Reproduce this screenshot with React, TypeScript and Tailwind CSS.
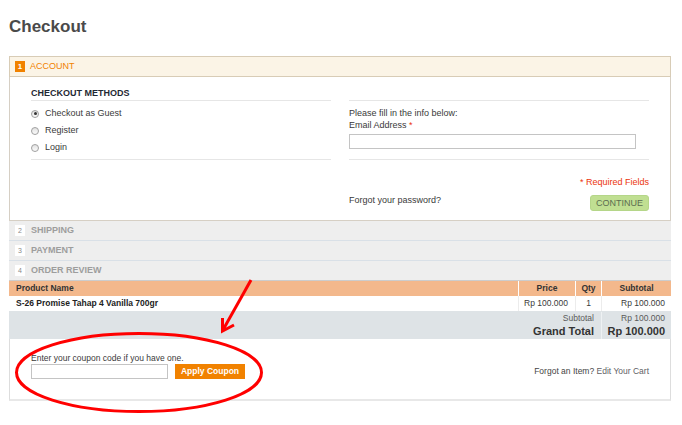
const font = "font-['Liberation_Sans',Arial,Helvetica,sans-serif]"

function Radio({ checked }: { checked?: boolean }) {
  return (
    <span className="flex h-[8px] w-[8px] items-center justify-center rounded-full border border-[#a0a0a0] bg-linear-to-b from-[#e2e2e2] to-[#fbfbfb]">
      {checked && <span className="h-[3px] w-[3px] rounded-full bg-[#333]" />}
    </span>
  )
}

function Step({ n, label, last }: { n: number; label: string; last?: boolean }) {
  return (
    <div
      className={`flex h-[20px] items-center gap-[6px] border-b bg-[#eeeeee] pl-[6px] ${
        last ? 'border-[#cccccc]' : 'border-[#d9e0e7]'
      }`}
    >
      <span className="flex h-[11px] w-[10px] items-center justify-center bg-white text-[7px] leading-none text-[#8a8a8a]">
        {n}
      </span>
      <span className="text-[9px] font-bold leading-none text-[#9d9d9d]">{label}</span>
    </div>
  )
}

export default function App() {
  return (
    <div className={`relative h-[425px] w-[682px] overflow-hidden bg-white ${font}`}>
      <div className="pl-[9px] pt-[17px]">
        <h1 className="h-[20px] text-[17px] font-bold leading-[20px] text-[#4a4a4a]">Checkout</h1>

        <div className="mt-[19px] w-[662px]">
          {/* step 1 header */}
          <div className="flex h-[21px] items-center gap-[5px] border border-[#d8ccb6] bg-[#fbf4e6] pl-[5px]">
            <span className="flex h-[11px] w-[10px] items-center justify-center bg-[#f18200] text-[8px] font-bold leading-none text-white">
              1
            </span>
            <span className="text-[9px] leading-none text-[#f18200]">ACCOUNT</span>
          </div>

          {/* account content */}
          <div className="flex h-[144px] border-x border-b border-[#d6cfc4] px-[21px]">
            <div className="w-[300px]">
              <div className="border-b border-[#e6e6e6] pt-[10px] pb-[1px]">
                <h2 className="text-[9px] font-bold leading-[12px] text-[#1f2833]">CHECKOUT METHODS</h2>
              </div>
              <div className="border-b border-[#e6e6e6] pt-[4px] pb-[3px] text-[9px] text-[#3a3a3a]">
                <div className="flex h-[17px] items-center gap-[6px]">
                  <Radio checked />
                  <span>Checkout as Guest</span>
                </div>
                <div className="flex h-[17px] items-center gap-[6px]">
                  <Radio />
                  <span>Register</span>
                </div>
                <div className="flex h-[17px] items-center gap-[6px]">
                  <Radio />
                  <span>Login</span>
                </div>
              </div>
            </div>

            <div className="ml-[18px] flex-1">
              <div className="mt-[23px] border-y border-[#e6e6e6] pt-[6px] pb-[10px] text-[9px] text-[#3a3a3a]">
                <p className="leading-[12px]">Please fill in the info below:</p>
                <p className="leading-[12px]">
                  Email Address <span className="text-[#eb340a]">*</span>
                </p>
                <div className="mt-[3px] h-[15px] w-[287px] border border-[#c4c4c4] bg-white" />
              </div>
              <p className="mt-[16px] text-right text-[9px] leading-[12px] text-[#eb340a]">* Required Fields</p>
              <div className="mt-[7px] flex items-start justify-between">
                <span className="text-[9px] leading-[10px] text-[#3a3a3a]">Forgot your password?</span>
                <button className="h-[16px] w-[59px] rounded-[3px] border border-[#b5d689] bg-[#c0df92] text-[9px] leading-none text-[#5c6d50]">
                  CONTINUE
                </button>
              </div>
            </div>
          </div>

          <Step n={2} label="SHIPPING" />
          <Step n={3} label="PAYMENT" />
          <Step n={4} label="ORDER REVIEW" last />

          {/* order table */}
          <div className="grid h-[15px] grid-cols-[509px_57px_26px_70px] items-center bg-[#f3b88c] text-[8.5px] font-bold leading-[15px] text-[#333]">
            <span className="pl-[7px]">Product Name</span>
            <span className="border-l border-white text-center">Price</span>
            <span className="border-l border-white text-center">Qty</span>
            <span className="border-l border-white text-center">Subtotal</span>
          </div>
          <div className="grid h-[15px] grid-cols-[509px_57px_26px_70px] bg-white text-[8.5px] leading-[15px] text-[#3a3a3a]">
            <span className="pl-[7px] font-bold text-[#222]">S-26 Promise Tahap 4 Vanilla 700gr</span>
            <span className="border-l border-[#ececec] pr-[7px] text-right">Rp 100.000</span>
            <span className="border-l border-[#ececec] text-center">1</span>
            <span className="border-l border-[#ececec] pr-[6px] text-right">Rp 100.000</span>
          </div>
          <div className="grid h-[28px] grid-cols-[592px_70px] bg-[#dee3e6] pt-[1px]">
            <div className="text-right">
              <p className="pr-[7px] text-[8.5px] leading-[12px] text-[#5a5a5a]">Subtotal</p>
              <p className="pr-[7px] text-[11px] font-bold leading-[14px] text-[#333]">Grand Total</p>
            </div>
            <div className="border-l border-[#eef1f3] text-right">
              <p className="pr-[6px] text-[8.5px] leading-[12px] text-[#5a5a5a]">Rp 100.000</p>
              <p className="pr-[6px] text-[11px] font-bold leading-[14px] text-[#333]">Rp 100.000</p>
            </div>
          </div>

          {/* coupon */}
          <div className="flex h-[62px] items-start justify-between border-x border-b-2 border-x-[#dddddd] border-b-[#e8e8e8] px-[21px] pt-[13px]">
            <div>
              <p className="text-[8.5px] leading-[12px] text-[#3a3a3a]">Enter your coupon code if you have one.</p>
              <div className="flex items-center gap-[7px]">
                <div className="h-[15px] w-[137px] border border-[#c4c4c4] bg-white" />
                <button className="h-[15px] w-[70px] bg-[#f18200] text-[8.5px] font-bold leading-none text-white">
                  Apply Coupon
                </button>
              </div>
            </div>
            <p className="mt-[12px] text-[8.5px] leading-[15px] text-[#444]">
              Forgot an Item? <span className="text-[#5f5f66]">Edit Your Cart</span>
            </p>
          </div>
        </div>
      </div>

      {/* red annotation overlay */}
      <svg className="pointer-events-none absolute left-0 top-0" width="682" height="425" viewBox="0 0 682 425">
        <ellipse cx="139" cy="372.5" rx="122.5" ry="39" fill="none" stroke="#ff0000" strokeWidth="3" />
        <path d="M251 280 L223.5 329" stroke="#ff0000" strokeWidth="3" fill="none" />
        <path d="M222.5 318 L222.5 331 L234 325" stroke="#ff0000" strokeWidth="3" fill="none" />
      </svg>
    </div>
  )
}
